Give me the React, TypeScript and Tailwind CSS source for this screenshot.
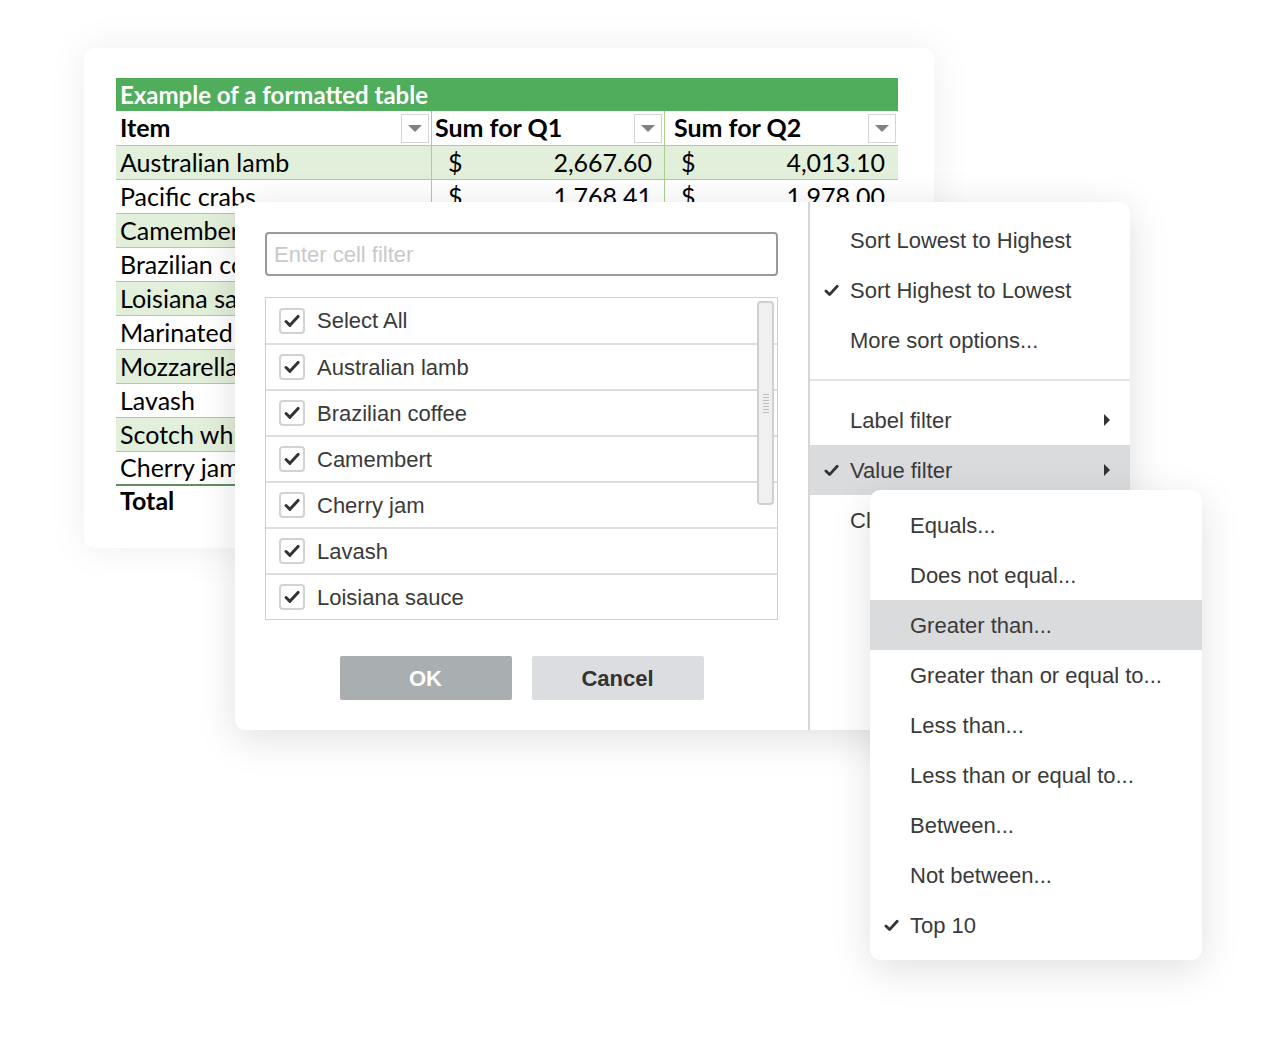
const rows = [
  { name: 'Australian lamb', q1: '2,667.60', q2: '4,013.10' },
  { name: 'Pacific crabs', q1: '1,768.41', q2: '1,978.00' },
  { name: 'Camembert Pierrot', q1: '3,182.40', q2: '4,683.50' },
  { name: 'Brazilian coffee', q1: '1,398.40', q2: '4,496.50' },
  { name: 'Loisiana sauce', q1: '1,347.36', q2: '2,750.69' },
  { name: 'Marinated herring', q1: '1,162.56', q2: '1,283.79' },
  { name: 'Mozzarella di Giovanni', q1: '1,064.02', q2: '1,890.60' },
  { name: 'Lavash', q1: '930.00', q2: '1,462.50' },
  { name: 'Scotch whisky', q1: '864.00', q2: '1,107.00' },
  { name: 'Cherry jam', q1: '540.00', q2: '828.00' },
]

const listItems = ['Select All', 'Australian lamb', 'Brazilian coffee', 'Camembert', 'Cherry jam', 'Lavash', 'Loisiana sauce']

const subItems = [
  { label: 'Equals...' },
  { label: 'Does not equal...' },
  { label: 'Greater than...', active: true },
  { label: 'Greater than or equal to...' },
  { label: 'Less than...' },
  { label: 'Less than or equal to...' },
  { label: 'Between...' },
  { label: 'Not between...' },
  { label: 'Top 10', checked: true },
]

const Tick = ({ className, bold }: { className?: string; bold?: boolean }) => (
  <svg viewBox="0 0 14 12" className={className} fill="none">
    <path
      d="M1.8 6.4 L5.2 9.8 L12.3 2"
      stroke="#333"
      strokeWidth={bold ? 2.6 : 2}
      strokeLinecap="round"
      strokeLinejoin="round"
    />
  </svg>
)

const DropBtn = () => (
  <div className="w-[28px] h-[29px] border border-[#d4d4d4] bg-white flex items-center justify-center shrink-0">
    <div className="w-0 h-0 border-l-[7px] border-r-[7px] border-t-[7px] border-l-transparent border-r-transparent border-t-[#808080]" />
  </div>
)

const Arrow = () => (
  <div className="w-0 h-0 border-t-[6px] border-b-[6px] border-l-[6px] border-t-transparent border-b-transparent border-l-[#333]" />
)

const TableCard = () => (
  <div className="absolute left-[84px] top-[48px] w-[850px] h-[500px] bg-white rounded-[10px] shadow-[0_0_40px_rgba(0,0,0,0.07)] px-[32px] pt-[30px] font-['Lato',sans-serif] text-[25px] text-black">
    <div className="w-[782px]">
      <div className="h-[33px] bg-[#4fad5b] text-white font-bold text-[24px] leading-[33px] px-[4px]">Example of a formatted table</div>
      <div className="flex h-[35px] border-b border-[#a9d08e] font-bold">
        <div className="w-[315px] flex items-center justify-between pl-[4px] pr-[2px]">
          <span>Item</span>
          <DropBtn />
        </div>
        <div className="w-[233px] flex items-center justify-between border-l border-[#a9d08e] pl-[3px] pr-[2px]">
          <span>Sum for Q1</span>
          <DropBtn />
        </div>
        <div className="w-[234px] flex items-center justify-between border-l border-[#a9d08e] pl-[9px] pr-[2px]">
          <span>Sum for Q2</span>
          <DropBtn />
        </div>
      </div>
      {rows.map((r, i) => (
        <div
          key={r.name}
          className={`flex h-[34px] items-center ${i % 2 === 0 ? 'bg-[#e2efda]' : 'bg-white'} ${i === rows.length - 1 ? 'border-b-2 border-[#5f8f62]' : 'border-b border-[#a9d08e]'}`}
        >
          <div className="w-[315px] pl-[4px] whitespace-nowrap overflow-hidden">{r.name}</div>
          <div className="w-[233px] h-full flex items-center justify-between border-l border-[#a9d08e] pl-[16px] pr-[12px]">
            <span>$</span>
            <span>{r.q1}</span>
          </div>
          <div className="w-[234px] h-full flex items-center justify-between border-l border-[#a9d08e] pl-[16px] pr-[13px]">
            <span>$</span>
            <span>{r.q2}</span>
          </div>
        </div>
      ))}
      <div className="flex h-[30px] items-center font-bold">
        <div className="w-[315px] pl-[4px]">Total</div>
        <div className="w-[233px] flex justify-between pl-[16px] pr-[12px]">
          <span>$</span>
          <span>14,455.15</span>
        </div>
        <div className="w-[234px] flex justify-between pl-[16px] pr-[13px]">
          <span>$</span>
          <span>25,003.98</span>
        </div>
      </div>
    </div>
  </div>
)

const FilterDialog = () => (
  <div className="absolute left-[235px] top-[202px] w-[895px] h-[528px] bg-white rounded-[10px] shadow-[0_8px_40px_rgba(0,0,0,0.13)] flex font-['Liberation_Sans',Arial,sans-serif] text-[22px] text-[#3a3a3a]">
    <div className="w-[575px] px-[30px] pt-[30px] border-r-2 border-[#d6d6d6]">
      <div className="w-[513px] h-[44px] border-2 border-[#9a9a9a] rounded-[4px] flex items-center px-[7px] text-[#c9c9c9]">Enter cell filter</div>
      <div className="relative w-[513px] mt-[21px] border border-[#cfcfcf]">
        {listItems.map((item, i) => (
          <div key={item} className={`flex items-center pl-[13px] gap-[12px] ${i > 0 ? 'h-[46px] border-t-2 border-[#dedede]' : 'h-[45px]'}`}>
            <div className="w-[26px] h-[26px] border-2 border-[#d2d2d2] rounded-[4px] flex items-center justify-center">
              <Tick className="w-[16px] h-[14px]" bold />
            </div>
            <span>{item}</span>
          </div>
        ))}
        <div className="absolute right-[3px] top-[3px] w-[17px] h-[204px] bg-[#f0f0f0] border-2 border-[#d0d0d0] rounded-[4px] flex flex-col items-center justify-center gap-[2px]">
          {[0, 1, 2, 3, 4, 5, 6].map((k) => (
            <div key={k} className="w-[6px] h-[1px] bg-[#bdbdbd]" />
          ))}
        </div>
      </div>
      <div className="flex justify-center gap-[20px] mt-[36px] font-bold">
        <div className="w-[172px] h-[44px] rounded-[2px] bg-[#a9aeb0] text-white flex items-center justify-center">OK</div>
        <div className="w-[172px] h-[44px] rounded-[2px] bg-[#dcdde0] text-[#333] flex items-center justify-center">Cancel</div>
      </div>
    </div>
    <div className="flex-1 pt-[13px]">
      <div className="h-[50px] flex items-center pl-[40px]">Sort Lowest to Highest</div>
      <div className="h-[50px] flex items-center pl-[14px] gap-[11px]">
        <Tick className="w-[15px] h-[13px]" bold />
        <span>Sort Highest to Lowest</span>
      </div>
      <div className="h-[50px] flex items-center pl-[40px]">More sort options...</div>
      <div className="mt-[14px] border-t-2 border-[#e3e3e3] pt-[14px]">
        <div className="h-[50px] flex items-center justify-between pl-[40px] pr-[20px]">
          <span>Label filter</span>
          <Arrow />
        </div>
        <div className="h-[50px] flex items-center justify-between pl-[14px] pr-[20px] bg-[#dadbdd]">
          <div className="flex items-center gap-[11px]">
            <Tick className="w-[15px] h-[13px]" bold />
            <span>Value filter</span>
          </div>
          <Arrow />
        </div>
        <div className="h-[50px] flex items-center pl-[40px]">Clear filter</div>
      </div>
    </div>
  </div>
)

const SubMenu = () => (
  <div className="absolute left-[870px] top-[490px] w-[332px] h-[470px] bg-white rounded-[10px] shadow-[0_10px_40px_rgba(0,0,0,0.12)] py-[10px] font-['Liberation_Sans',Arial,sans-serif] text-[22px] text-[#3a3a3a]">
    {subItems.map((s) => (
      <div key={s.label} className={`h-[50px] flex items-center ${s.active ? 'bg-[#dadbdd]' : ''} ${s.checked ? 'pl-[14px] gap-[11px]' : 'pl-[40px]'}`}>
        {s.checked && <Tick className="w-[15px] h-[13px]" bold />}
        <span>{s.label}</span>
      </div>
    ))}
  </div>
)

export default function App() {
  return (
    <div className="relative w-[1280px] h-[1040px] bg-white overflow-hidden">
      <TableCard />
      <FilterDialog />
      <SubMenu />
    </div>
  )
}
